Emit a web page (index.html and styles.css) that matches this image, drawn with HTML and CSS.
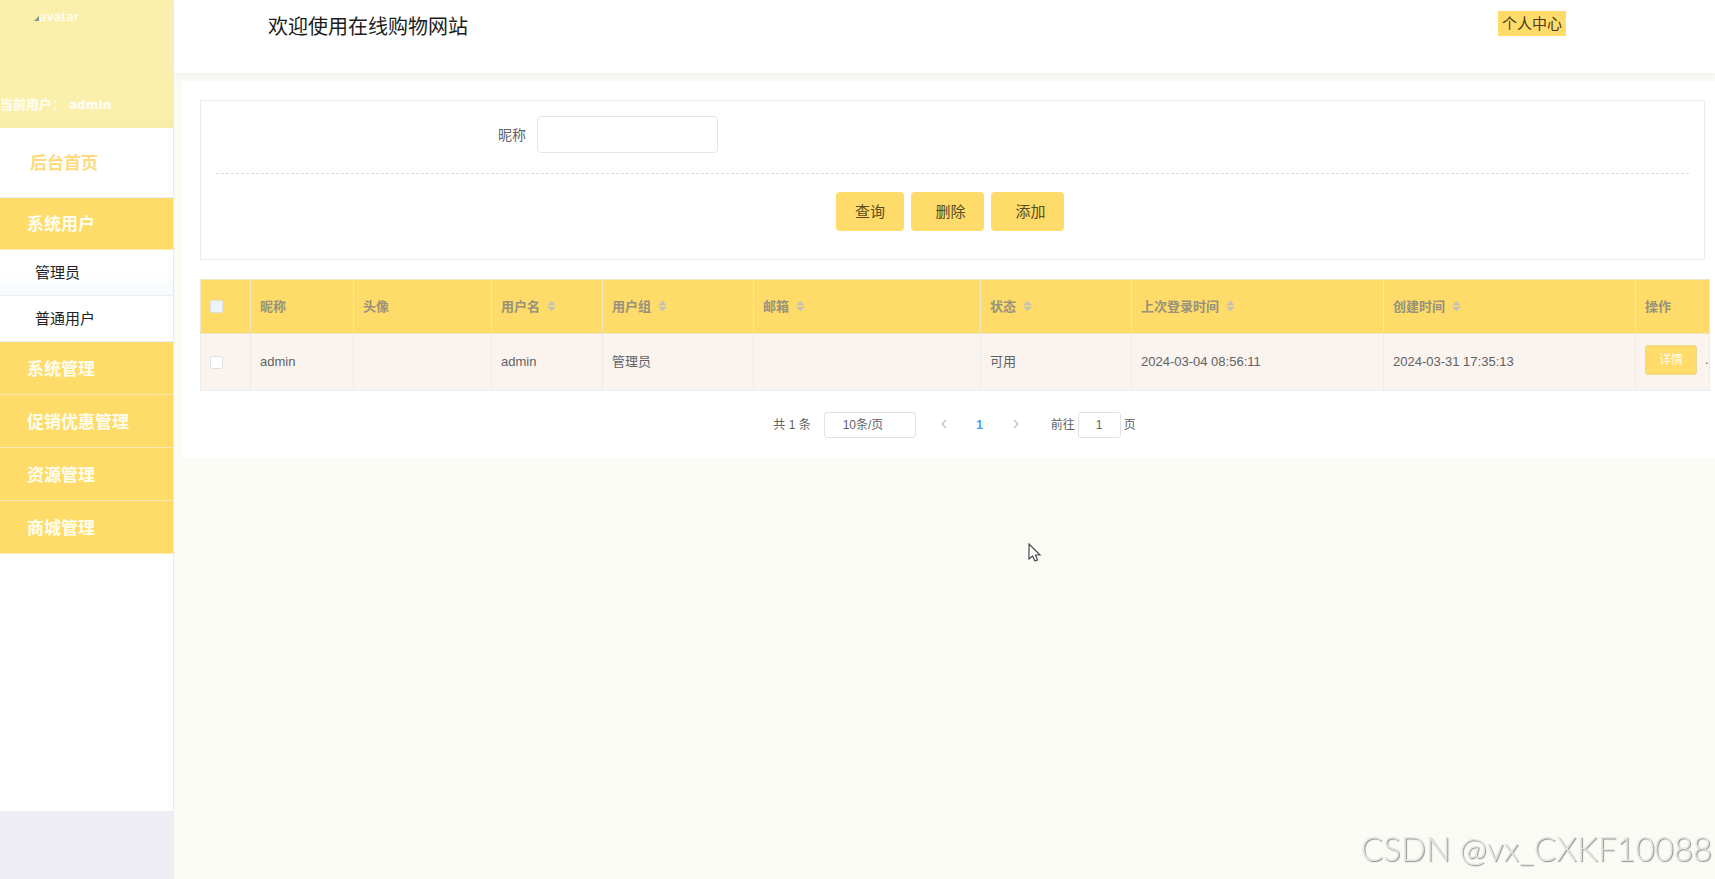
FILE: index.html
```html
<!DOCTYPE html>
<html lang="zh-CN">
<head>
<meta charset="utf-8">
<title>在线购物网站</title>
<link rel="stylesheet" href="styles.css">
</head>
<body>
<div class="layout">
  <aside class="sidebar">
    <div class="sidebar-body">
      <div class="profile">
        <div class="avatar">
          <svg class="avatar-icon" width="5" height="5" viewBox="0 0 5 5" aria-hidden="true"><path d="M5 0V5H0Z" fill="#7d9a7c"/></svg>
          <span>avatar</span>
        </div>
        <div class="current-user"><span>当前用户：</span><b>admin</b></div>
      </div>
      <nav class="menu">
        <a class="menu-home" href="#">后台首页</a>
        <a class="menu-group" href="#">系统用户</a>
        <a class="menu-item menu-item-active" href="#">管理员</a>
        <a class="menu-item" href="#">普通用户</a>
        <a class="menu-group" href="#">系统管理</a>
        <a class="menu-group" href="#">促销优惠管理</a>
        <a class="menu-group" href="#">资源管理</a>
        <a class="menu-group" href="#">商城管理</a>
      </nav>
    </div>
  </aside>
  <div class="main">
    <header class="header">
      <h1 class="title">欢迎使用在线购物网站</h1>
      <a class="center-link" href="#">个人中心</a>
    </header>
    <main class="page">
      <form class="search">
        <div class="field">
          <label for="nickname">昵称</label>
          <input class="text-input" id="nickname" type="text">
        </div>
        <div class="actions">
          <button class="btn" type="button">查询</button>
          <button class="btn btn-wide" type="button">删除</button>
          <button class="btn btn-wide" type="button">添加</button>
        </div>
      </form>
      <table class="users">
        <colgroup>
          <col class="c-check"><col class="c-nick"><col class="c-avatar"><col class="c-name"><col class="c-group"><col class="c-mail"><col class="c-state"><col class="c-time"><col class="c-time"><col class="c-op">
        </colgroup>
        <thead>
          <tr>
            <th><input class="check" type="checkbox" aria-label="全选"></th>
            <th>昵称</th>
            <th>头像</th>
            <th>用户名<svg class="sort" viewBox="0 0 10 14"><path d="M5 1L10 6H0ZM5 13L0 8H10Z"/></svg></th>
            <th>用户组<svg class="sort" viewBox="0 0 10 14"><path d="M5 1L10 6H0ZM5 13L0 8H10Z"/></svg></th>
            <th>邮箱<svg class="sort" viewBox="0 0 10 14"><path d="M5 1L10 6H0ZM5 13L0 8H10Z"/></svg></th>
            <th>状态<svg class="sort" viewBox="0 0 10 14"><path d="M5 1L10 6H0ZM5 13L0 8H10Z"/></svg></th>
            <th>上次登录时间<svg class="sort" viewBox="0 0 10 14"><path d="M5 1L10 6H0ZM5 13L0 8H10Z"/></svg></th>
            <th>创建时间<svg class="sort" viewBox="0 0 10 14"><path d="M5 1L10 6H0ZM5 13L0 8H10Z"/></svg></th>
            <th>操作</th>
          </tr>
        </thead>
        <tbody>
          <tr>
            <td><input class="check" type="checkbox" aria-label="选择 admin"></td>
            <td>admin</td>
            <td></td>
            <td>admin</td>
            <td>管理员</td>
            <td></td>
            <td>可用</td>
            <td>2024-03-04 08:56:11</td>
            <td>2024-03-31 17:35:13</td>
            <td class="ops"><div class="ops-row"><button class="detail" type="button">详情</button><span>.</span></div></td>
          </tr>
        </tbody>
      </table>
      <div class="pager">
        <span class="total">共 1 条</span>
        <select class="page-size" aria-label="每页条数"><option>10条/页</option></select>
        <button class="pager-btn" type="button" aria-label="上一页"><svg width="6" height="10" viewBox="0 0 6 10"><path d="M5 1L1 5L5 9"/></svg></button>
        <button class="pager-btn pager-current" type="button">1</button>
        <button class="pager-btn" type="button" aria-label="下一页"><svg width="6" height="10" viewBox="0 0 6 10"><path d="M1 1L5 5L1 9"/></svg></button>
        <label class="jump">前往<input class="jump-input" type="text" value="1">页</label>
      </div>
    </main>
  </div>
</div>
<svg class="cursor" width="14" height="20" viewBox="0 0 14 20" aria-hidden="true"><path d="M1 1V16L4.500 13L7 18L9.500 17L7.500 12H12Z" fill="#fff" stroke="#4a4a4e" stroke-width="1.200"/></svg>
<div class="watermark">CSDN @vx_CXKF10088</div>
</body>
</html>
```
FILE: styles.css
```css
* { box-sizing: border-box; }

body {
  margin: 0;
  background: #fafbf5;
  color: #606266;
  font: 13px/20px "Liberation Sans", "Noto Sans CJK SC", sans-serif;
}

a { color: inherit; text-decoration: none; }
button, input, select { font: inherit; color: inherit; }

.layout { display: flex; min-height: 100vh; }

/* sidebar */
.sidebar {
  flex: 0 0 174px;
  background: #eeedf3;
  padding-bottom: 68px;
}
.sidebar-body {
  height: 100%;
  background: #fff;
  border-right: 1px solid #e8eaea;
}
.profile {
  display: flex;
  flex-direction: column;
  justify-content: space-between;
  height: 128px;
  padding: 6px 0 14px;
  background: linear-gradient(#fbf0ab 85%, #f7eba8);
  color: #fffef5;
  font-family: "Open Sans", "Noto Sans CJK SC", sans-serif;
}
.avatar { display: flex; align-items: center; padding-left: 34px; font-weight: 600; }
.avatar-icon { margin-top: 4px; }
.current-user { display: flex; font-weight: 700; gap: 4px; }

.menu a { display: flex; align-items: center; border-bottom: 1px solid #e9eef0; }
.menu .menu-home {
  height: 70px;
  padding: 3px 0 0 30px;
  color: #ffda7a;
  font-size: 17px;
  font-weight: 700;
}
.menu .menu-group {
  height: 52px;
  padding: 3px 0 0 27px;
  border-color: #f9e8b4;
  background: #ffdb69;
  color: #fffef0;
  font-size: 17px;
  font-weight: 700;
}
.menu .menu-item {
  height: 46px;
  padding-left: 35px;
  color: #222;
  font-size: 15px;
}
.menu .menu-item-active { background: linear-gradient(#fff 50%, #f6fafe); }
.menu .menu-item + .menu-group,
.menu .menu-group + .menu-group { height: 53px; }

/* header */
.main { flex: 1; min-width: 0; }
.header {
  display: flex;
  justify-content: space-between;
  align-items: flex-start;
  height: 73px;
  padding: 11px 149px 0 94px;
  background: #fff;
  box-shadow: 0 1px 8px #e6ebe8;
}
.title { margin: 0; color: #1c1c1c; font-size: 20px; line-height: 32px; font-weight: 400; }
.center-link {
  padding: 0 4px;
  background: #ffdb69;
  color: #4a3a18;
  font-size: 15px;
  line-height: 25px;
}

/* content */
.page {
  position: relative;
  margin: 9px 0 0 8px;
  padding: 18px 6px 20px 18px;
  background: #fff;
}
.search {
  margin-right: 4px;
  height: 160px;
  padding: 15px;
  border: 1px solid #e9edee;
}
.field {
  display: flex;
  align-items: center;
  gap: 11px;
  padding: 0 0 20px 282px;
  border-bottom: 1px dashed #deded6;
  font-size: 14px;
}
.text-input {
  width: 181px;
  height: 37px;
  border: 1px solid #e2e6e8;
  border-radius: 4px;
  padding: 0 14px;
}
.actions { display: flex; justify-content: center; gap: 7px; padding: 18px 5px 0 0; }
.btn {
  width: 68px;
  height: 39px;
  padding: 0;
  border: 0;
  border-radius: 4px;
  background: #ffdb69;
  color: #594b20;
  font-size: 15px;
}
.btn-wide { width: 73px; padding-left: 6px; }

/* table */
.users {
  width: 100%;
  margin-top: 19px;
  table-layout: fixed;
  border-collapse: collapse;
}
.c-check { width: 50px; }
.c-nick { width: 103px; }
.c-avatar { width: 138px; }
.c-name { width: 111px; }
.c-group { width: 151px; }
.c-mail { width: 227px; }
.c-state { width: 151px; }
.c-time { width: 252px; }
.c-op { width: 74px; }
.users th, .users td {
  padding: 0 9px;
  border: 1px solid #e9edef;
  text-align: left;
  white-space: nowrap;
}
.users th {
  height: 54px;
  background: #ffdb69;
  border-color: #ede5c4;
  color: #96927c;
  font-weight: 700;
}
.users td { height: 57px; background: #faf3ee; }
.check {
  appearance: none;
  display: block;
  width: 13px;
  height: 13px;
  margin: 0;
  border: 1px solid #dde0e4;
  border-radius: 2px;
  background: #fff;
}
.users th .check { background: #edf3fb; }
.sort { width: 9px; height: 12px; margin-left: 7px; vertical-align: -1px; fill: #c3c3b8; }
.ops-row { display: flex; align-items: center; gap: 8px; padding-bottom: 4px; }
.detail {
  flex: 0 0 52px;
  height: 30px;
  padding: 0;
  border: 1px solid #e8d79b;
  border-radius: 3px;
  background: #ffdb69;
  color: #fffef0;
  font-size: 12px;
}

/* pagination */
.pager {
  display: flex;
  align-items: center;
  justify-content: center;
  height: 26px;
  margin-top: 21px;
  font-size: 12px;
}
.page-size {
  appearance: none;
  width: 92px;
  height: 26px;
  margin: 0 10px 0 13px;
  padding: 0 18px;
  border: 1px solid #dfe3e6;
  border-radius: 3px;
  background: #fff;
}
.pager-btn { width: 36px; height: 26px; padding: 0; border: 0; background: none; }
.pager-btn svg { fill: none; stroke: #c0c4cc; stroke-width: 1.5; }
.pager-current { color: #409eff; font-weight: 700; }
.jump { display: flex; align-items: center; gap: 3px; margin-left: 17px; }
.jump-input {
  width: 43px;
  height: 26px;
  padding: 0;
  border: 1px solid #dfe3e6;
  border-radius: 3px;
  text-align: center;
}

/* overlays */
.cursor { position: absolute; left: 1028px; top: 543px; }
.watermark {
  position: fixed;
  right: 3px;
  bottom: 11px;
  color: #e4e5e1;
  font: 300 33px/40px Lato, sans-serif;
  text-shadow: 1px 1px 1px #8c8c8c;
}
```
